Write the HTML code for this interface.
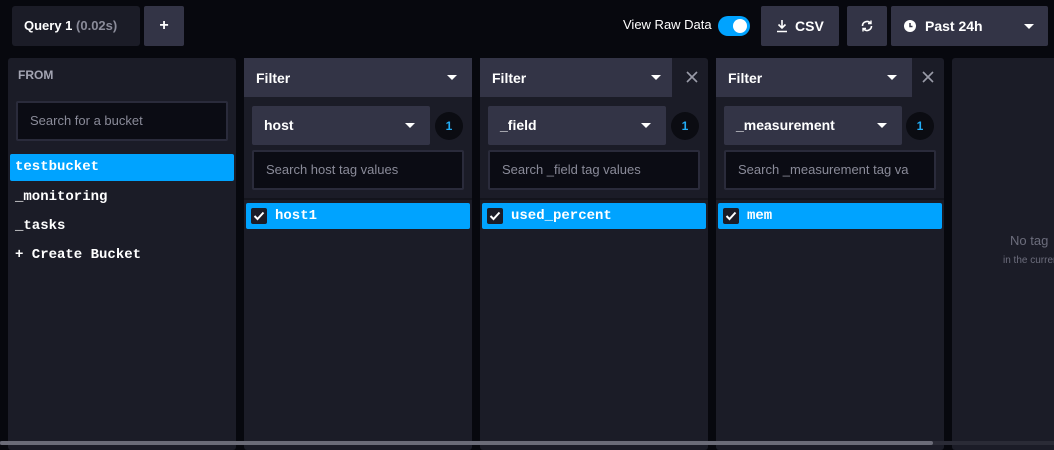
<!DOCTYPE html>
<html><head><style>
*{box-sizing:border-box;margin:0;padding:0}
body{width:1054px;height:450px;background:#07080e;font-family:"Liberation Sans",sans-serif;position:relative;overflow:hidden;color:#fff}
.a{position:absolute}
.btn{background:#333446;border-radius:2px}
.panel{background:#1b1c27;border-radius:3px}
.hdr{background:#333446;font-weight:bold;font-size:14px;padding:12px 12px;height:39px}
.caret{width:0;height:0;border-left:5px solid transparent;border-right:5px solid transparent;border-top:5px solid #fff}
.inp{background:#0b0c14;border:2px solid #2a2b3b;border-radius:2px;color:#8a8b99;font-size:13px;padding:0 12px;line-height:36px;white-space:nowrap;overflow:hidden}
.dd{background:#333446;border-radius:2px;font-weight:bold;font-size:14px;padding:0 12px;line-height:39px}
.badge{width:28px;height:28px;border-radius:50%;background:#0b0c12;color:#22adf6;font-size:12px;font-weight:bold;text-align:center;line-height:28px}
.sel{background:#00a3ff;border-radius:2px}
.mono{font-family:"Liberation Mono","DejaVu Sans Mono",monospace;font-weight:bold;font-size:14px}
.cb{width:16px;height:16px;background:#1b1c27;border-radius:2px}
</style></head><body>
<div class="a panel" style="left:12px;top:6px;width:128px;height:40px;background:#1b1c27;font-size:13px;font-weight:bold;line-height:40px;padding-left:12px">Query 1 <span style="color:#8a8b99">(0.02s)</span></div>
<div class="a btn" style="left:144px;top:6px;width:40px;height:40px;text-align:center;line-height:40px;font-weight:bold;font-size:16px">+</div>
<div class="a" style="left:623px;top:17px;font-size:13px">View Raw Data</div>
<div class="a" style="left:718px;top:16px;width:32px;height:20px;border-radius:10px;background:#00a3ff"><div class="a" style="left:15px;top:3px;width:14px;height:14px;border-radius:50%;background:#fff"></div></div>
<div class="a btn" style="left:761px;top:6px;width:78px;height:40px;font-weight:bold;font-size:14px;line-height:40px;padding-left:14px">
<svg width="14" height="14" viewBox="0 0 14 14" style="vertical-align:-2px;margin-right:6px"><path d="M7 1v8M3.5 5.5L7 9l3.5-3.5M2 12.5h10" stroke="#fff" stroke-width="1.6" fill="none"/></svg>CSV</div>
<div class="a btn" style="left:847px;top:6px;width:40px;height:40px">
<svg class="a" style="left:13px;top:13px" width="14" height="14" viewBox="0 0 14 14"><path d="M2.5 7a4.5 4.5 0 0 1 8-2.8M11.5 7a4.5 4.5 0 0 1-8 2.8" stroke="#fff" stroke-width="1.6" fill="none"/><path d="M11 1.5v3h-3M3 12.5v-3h3" stroke="#fff" stroke-width="1.4" fill="none"/></svg></div>
<div class="a btn" style="left:891px;top:6px;width:157px;height:40px;font-weight:bold;font-size:14px;line-height:40px;padding-left:34px">Past 24h
<svg class="a" style="left:13px;top:14px" width="12" height="12" viewBox="0 0 12 12"><circle cx="6" cy="6" r="6" fill="#fff"/><path d="M6 3v3.5h2.5" stroke="#333446" stroke-width="1.5" fill="none"/></svg>
<div class="a caret" style="left:133px;top:18px"></div></div>

<div class="a panel" style="left:8px;top:58px;width:228px;height:392px">
<div class="a" style="left:10px;top:10px;font-size:12px;font-weight:bold;color:#a4a5b3">FROM</div>
<div class="a inp" style="left:8px;top:43px;width:212px;height:40px;line-height:36px">Search for a bucket</div>
<div class="a sel mono" style="left:2px;top:96px;width:224px;height:27px;line-height:27px;padding-left:5px">testbucket</div>
<div class="a mono" style="left:7px;top:131px">_monitoring</div>
<div class="a mono" style="left:7px;top:160px">_tasks</div>
<div class="a mono" style="left:7px;top:189px">+ Create Bucket</div>
</div>

<div class="a panel" style="left:244px;top:58px;width:228px;height:392px">
<div class="a hdr" style="left:0;top:0;width:228px">Filter<div class="a caret" style="left:203px;top:17px"></div></div>
<div class="a dd" style="left:8px;top:48px;width:178px;height:39px">host<div class="a caret" style="left:153px;top:17px"></div></div>
<div class="a badge" style="left:191px;top:54px">1</div>
<div class="a inp" style="left:8px;top:92px;width:212px;height:40px">Search host tag values</div>
<div class="a" style="left:0;top:140px;width:228px;height:2px;background:#13141c"></div>
<div class="a sel mono" style="left:2px;top:145px;width:224px;height:26px;line-height:26px;padding-left:29px">host1<div class="a cb" style="left:5px;top:5px"><svg width="16" height="16"><path d="M3.5 8l3 3 6-6.5" stroke="#fff" stroke-width="2" fill="none"/></svg></div></div>
</div>

<div class="a panel" style="left:480px;top:58px;width:228px;height:392px">
<div class="a hdr" style="left:0;top:0;width:192px">Filter<div class="a caret" style="left:171px;top:17px"></div></div>
<svg class="a" style="left:206px;top:13px" width="12" height="12"><path d="M1 1l10 10M11 1L1 11" stroke="#9a9ba8" stroke-width="1.6"/></svg>
<div class="a dd" style="left:8px;top:48px;width:178px;height:39px">_field<div class="a caret" style="left:153px;top:17px"></div></div>
<div class="a badge" style="left:191px;top:54px">1</div>
<div class="a inp" style="left:8px;top:92px;width:212px;height:40px">Search _field tag values</div>
<div class="a" style="left:0;top:140px;width:228px;height:2px;background:#13141c"></div>
<div class="a sel mono" style="left:2px;top:145px;width:224px;height:26px;line-height:26px;padding-left:29px">used_percent<div class="a cb" style="left:5px;top:5px"><svg width="16" height="16"><path d="M3.5 8l3 3 6-6.5" stroke="#fff" stroke-width="2" fill="none"/></svg></div></div>
</div>

<div class="a panel" style="left:716px;top:58px;width:228px;height:392px">
<div class="a hdr" style="left:0;top:0;width:196px">Filter<div class="a caret" style="left:171px;top:17px"></div></div>
<svg class="a" style="left:206px;top:13px" width="12" height="12"><path d="M1 1l10 10M11 1L1 11" stroke="#9a9ba8" stroke-width="1.6"/></svg>
<div class="a dd" style="left:8px;top:48px;width:178px;height:39px">_measurement<div class="a caret" style="left:153px;top:17px"></div></div>
<div class="a badge" style="left:190px;top:54px">1</div>
<div class="a inp" style="left:8px;top:92px;width:212px;height:40px">Search _measurement tag va</div>
<div class="a" style="left:0;top:140px;width:228px;height:2px;background:#13141c"></div>
<div class="a sel mono" style="left:2px;top:145px;width:224px;height:26px;line-height:26px;padding-left:29px">mem<div class="a cb" style="left:5px;top:5px"><svg width="16" height="16"><path d="M3.5 8l3 3 6-6.5" stroke="#fff" stroke-width="2" fill="none"/></svg></div></div>
</div>

<div class="a panel" style="left:952px;top:58px;width:110px;height:392px">
<div class="a" style="left:58px;top:175px;font-size:13px;color:#6c6d7c;white-space:nowrap">No tag</div>
<div class="a" style="left:51px;top:197px;font-size:10px;color:#6c6d7c;white-space:nowrap">in the current</div>
</div>

<div class="a" style="left:0;top:441px;width:1054px;height:4px;background:#2a2b36"></div>
<div class="a" style="left:0;top:441px;width:933px;height:4px;background:#6b6c78;border-radius:2px"></div>
</body></html>
